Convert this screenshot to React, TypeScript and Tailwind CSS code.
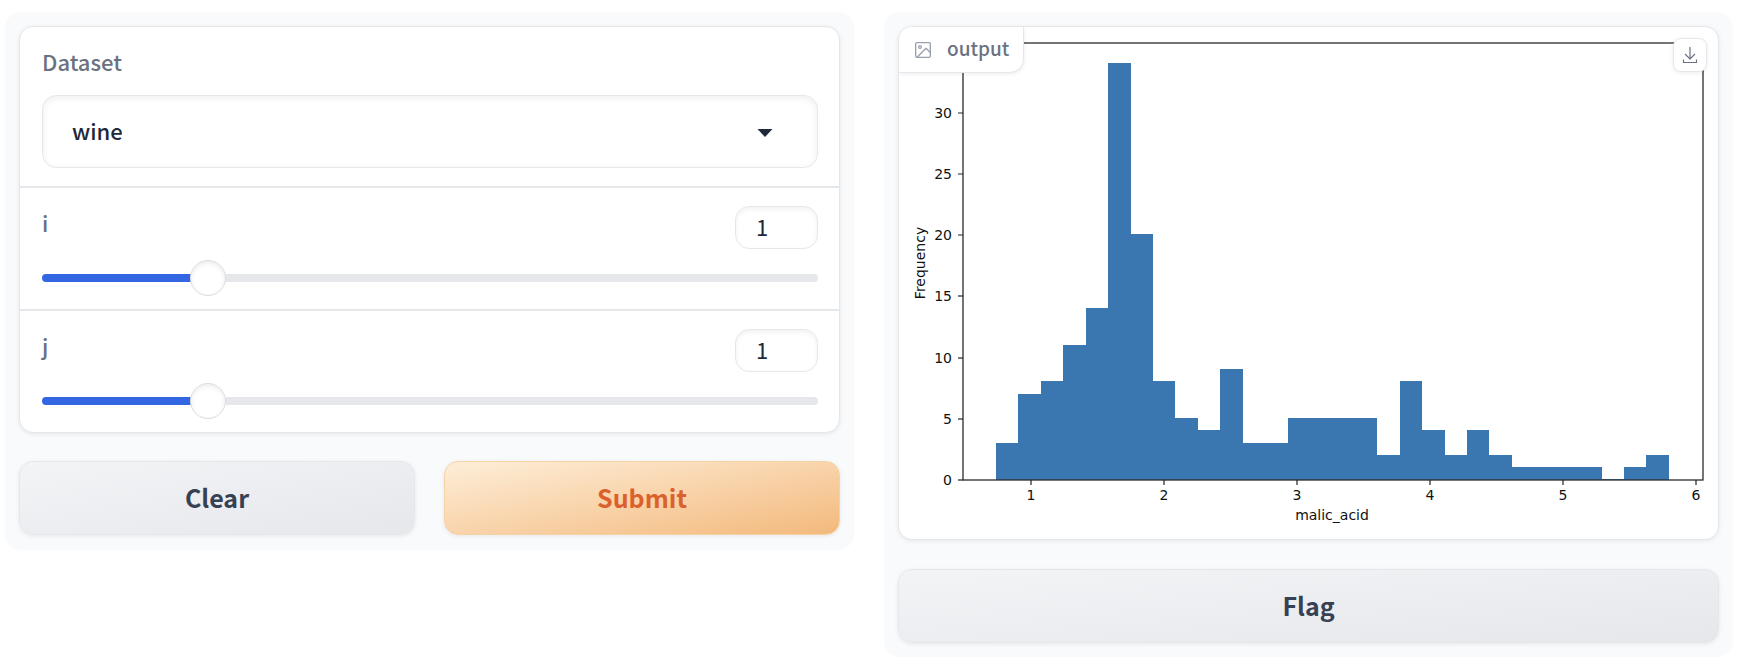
import React, { useState } from 'react';

const COUNTS = [
  3, 7, 8, 11, 14, 34, 20, 8, 5, 4, 9, 3, 3, 5, 5, 5, 5, 2, 8, 4, 2, 4, 2, 1, 1, 1, 1, 0, 1, 2,
];
const X_TICKS = [1, 2, 3, 4, 5, 6];
const Y_TICKS = [0, 5, 10, 15, 20, 25, 30];

// plot area inside the 819x512 figure
const PLOT = { left: 64, right: 804, top: 16, bottom: 453 };
const BIN_START = 97;
const BIN_WIDTH = 22.43;
const UNIT_Y = 12.25;

const xPos = (v: number) => Math.round(132 + (v - 1) * 132.9);
const yPos = (v: number) => Math.round(PLOT.bottom - v * UNIT_Y);

const Histogram = () => (
  <svg
    viewBox="0 0 819 512"
    className="block h-auto w-full"
    role="img"
    aria-label="Histogram of malic_acid"
    fontFamily="'DejaVu Sans', sans-serif"
    fontSize="14"
    fill="#111111"
  >
    <g fill="#3a76af" shapeRendering="crispEdges">
      {COUNTS.map((count, n) => {
        const x = Math.round(BIN_START + n * BIN_WIDTH);
        const next = Math.round(BIN_START + (n + 1) * BIN_WIDTH);
        const y = Math.round(PLOT.bottom - 0.7 - count * UNIT_Y);
        return <rect key={n} x={x} y={y} width={next - x} height={PLOT.bottom - y} />;
      })}
    </g>
    <rect
      x={PLOT.left}
      y={PLOT.top}
      width={PLOT.right - PLOT.left}
      height={PLOT.bottom - PLOT.top}
      fill="none"
      stroke="#2b2b2b"
      strokeWidth="1.3"
    />
    {Y_TICKS.map((v) => (
      <g key={v}>
        <line x1={PLOT.left - 5} x2={PLOT.left} y1={yPos(v)} y2={yPos(v)} stroke="#222" strokeWidth="1.2" />
        <text x={PLOT.left - 11} y={yPos(v) + 5} textAnchor="end">{v}</text>
      </g>
    ))}
    {X_TICKS.map((v) => (
      <g key={v}>
        <line x1={xPos(v)} x2={xPos(v)} y1={PLOT.bottom} y2={PLOT.bottom + 5} stroke="#222" strokeWidth="1.2" />
        <text x={xPos(v)} y={PLOT.bottom + 20} textAnchor="middle">{v}</text>
      </g>
    ))}
    <text x="433" y="493" textAnchor="middle">malic_acid</text>
    <text transform="translate(26 236) rotate(-90)" textAnchor="middle">Frequency</text>
  </svg>
);

const Slider = ({ label, max }: { label: string; max: number }) => {
  const [value, setValue] = useState(1);

  return (
    <div className="pt-[18px] pr-[21px] pb-[13px] pl-[22px]">
      <div className="flex items-start justify-between">
        <label htmlFor={`range-${label}`} className="text-[22px] leading-8 text-gray-500 font-medium">{label}</label>
        <input
          type="number"
          aria-label={`${label} value`}
          min={0}
          max={max}
          value={value}
          onChange={(e) => setValue(Number(e.target.value))}
          className="h-[43px] w-[83px] appearance-none rounded-[14px] border border-gray-200 bg-white px-5 pb-1 text-[22px] leading-8 text-gray-800 shadow-[inset_0_2px_5px_rgba(0,0,0,0.06)] outline-none [-moz-appearance:textfield] [&::-webkit-inner-spin-button]:appearance-none"
        />
      </div>
      <input
        id={`range-${label}`}
        type="range"
        min={0}
        max={max}
        value={value}
        onChange={(e) => setValue(Number(e.target.value))}
        style={{ backgroundSize: `${(value / max) * 100}% 100%` }}
        className="mt-[25px] mb-[14px] block h-2 w-full cursor-pointer appearance-none rounded bg-gray-200 bg-[linear-gradient(#3366e3,#3366e3)] bg-no-repeat outline-none [&::-webkit-slider-thumb]:size-9 [&::-webkit-slider-thumb]:appearance-none [&::-webkit-slider-thumb]:rounded-full [&::-webkit-slider-thumb]:border [&::-webkit-slider-thumb]:border-[#dcdcde] [&::-webkit-slider-thumb]:bg-white [&::-webkit-slider-thumb]:shadow-[inset_0_2px_5px_rgba(0,0,0,0.08)]"
      />
    </div>
  );
};

const Button = ({ children, color }: { children: React.ReactNode; color: string }) => (
  <button
    type="button"
    className={`h-[74px] flex-1 cursor-pointer rounded-[14px] border pb-[3px] text-[25px] leading-8 font-bold shadow-[0_1px_4px_rgba(0,0,0,0.08)] ${color}`}
  >
    {children}
  </button>
);

const SECONDARY = 'border-gray-200 bg-linear-to-br from-gray-100 to-gray-200 text-gray-700';
const PRIMARY = 'border-[#f6d3a6] bg-linear-to-br from-[#fdeed8] to-[#f3b97c] text-[#db612c]';

export default function App() {
  const [dataset, setDataset] = useState('wine');

  return (
    <main className="flex items-start gap-[30px] bg-white pt-3 pr-[25px] pl-[5px] font-['Noto_Sans_CJK_SC',sans-serif]">
      <section className="flex min-w-0 flex-1 flex-col gap-7 rounded-2xl bg-[#f9fafc] px-[14px] pt-[14px] pb-[15px]">
        <form className="divide-y-2 divide-gray-200 overflow-hidden rounded-[14px] border border-gray-200 bg-white shadow-[0_1px_4px_rgba(0,0,0,0.08)]">
          <div className="pt-[18px] pr-[21px] pb-[18px] pl-[22px]">
            <label htmlFor="dataset" className="block text-[22px] leading-8 text-gray-500 font-medium">Dataset</label>
            <div className="relative mt-[18px]">
              <select
                id="dataset"
                value={dataset}
                onChange={(e) => setDataset(e.target.value)}
                className="block h-[73px] w-full appearance-none rounded-[14px] border border-gray-200 bg-white px-[29px] pb-[3px] text-[22px] font-medium text-gray-800 shadow-[inset_0_2px_7px_rgba(0,0,0,0.07)] outline-none"
              >
                <option value="wine">wine</option>
                <option value="iris">iris</option>
              </select>
              <svg viewBox="0 0 16 8" className="pointer-events-none absolute top-[34px] right-[45px] h-2 w-4 fill-gray-800">
                <path d="M0.5 0h15L8 8z" />
              </svg>
            </div>
          </div>
          <Slider label="i" max={5} />
          <Slider label="j" max={5} />
        </form>
        <div className="flex gap-[29px]">
          <Button color={SECONDARY}>Clear</Button>
          <Button color={PRIMARY}>Submit</Button>
        </div>
      </section>

      <section className="flex min-w-0 flex-1 flex-col gap-[29px] rounded-2xl bg-[#f9fafc] p-[14px]">
        <figure className="relative overflow-hidden rounded-[14px] border border-gray-200 bg-white shadow-[0_1px_4px_rgba(0,0,0,0.08)]">
          <Histogram />
          <figcaption className="absolute top-0 left-0 flex h-[46px] items-center gap-4 rounded-br-[14px] border-r border-b border-gray-200 bg-white pr-[14px] pb-[3px] pl-4 text-[19px] leading-7 font-medium text-gray-500 shadow-[0_1px_4px_rgba(0,0,0,0.08)]">
            <svg viewBox="0 0 24 24" className="mt-[3px] size-4 text-gray-400" fill="none" stroke="currentColor" strokeWidth="2" strokeLinecap="round" strokeLinejoin="round">
              <rect x="1" y="1" width="22" height="22" rx="2" />
              <circle cx="7.500" cy="7.500" r="2" />
              <path d="M22.500 15.500l-6-6L3.500 22.500" />
            </svg>
            output
          </figcaption>
          <button
            type="button"
            aria-label="Download"
            className="absolute top-[11px] right-[11px] flex h-[34px] w-[34px] cursor-pointer items-center justify-center rounded-lg border border-gray-200 bg-white text-gray-500 shadow-[0_1px_4px_rgba(0,0,0,0.08)]"
          >
            <svg viewBox="0 0 16 18" className="h-[18px] w-4" fill="none" stroke="currentColor" strokeWidth="1.2">
              <path d="M8 1v12M3 8l5 5 5-5M1.500 13.500v3h13v-3" />
            </svg>
          </button>
        </figure>
        <div className="flex">
          <Button color={SECONDARY}>Flag</Button>
        </div>
      </section>
    </main>
  );
}
